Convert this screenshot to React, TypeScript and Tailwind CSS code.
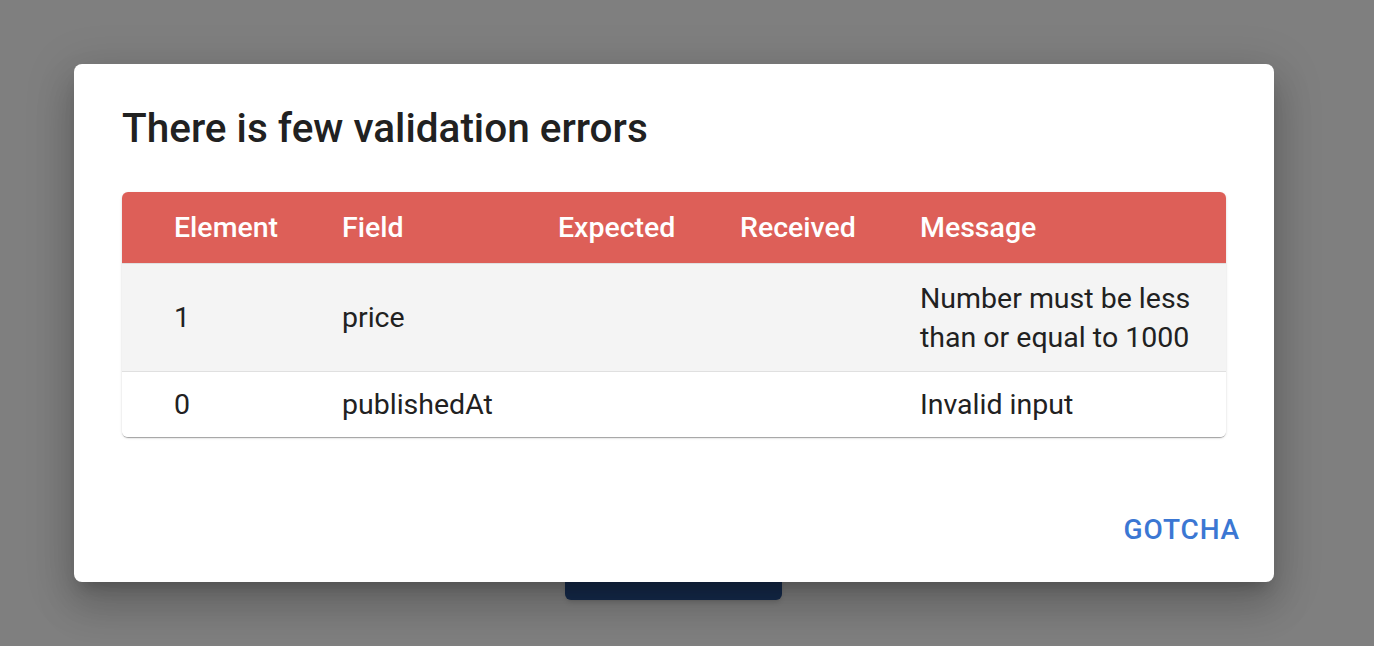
import React from 'react'

interface ErrorRow {
  element: string
  field: string
  expected: string
  received: string
  message: string
}

const rows: ErrorRow[] = [
  { element: '1', field: 'price', expected: '', received: '', message: 'Number must be less than or equal to 1000' },
  { element: '0', field: 'publishedAt', expected: '', received: '', message: 'Invalid input' },
]

const columns = ['Element', 'Field', 'Expected', 'Received', 'Message']

const grid = 'grid grid-cols-[168px_216px_182px_180px_1fr]'

export default function App() {
  return (
    <div
      className="relative h-[646px] w-full overflow-hidden bg-white"
      style={{ fontFamily: 'Roboto, "Noto Sans", sans-serif' }}
    >
      {/* Page content behind the dialog */}
      <div className="pt-[552px] pl-[565px]">
        <button className="h-[48px] w-[217px] rounded-md bg-[#2c5699] shadow-md" />
      </div>

      {/* Backdrop */}
      <div className="absolute inset-0 bg-black/50" />

      {/* Dialog */}
      <div className="absolute left-[74px] top-[64px] w-[1200px] h-[518px] rounded-lg bg-white px-[48px] pt-[40px] shadow-[0_11px_15px_-7px_rgba(0,0,0,0.2),0_24px_38px_3px_rgba(0,0,0,0.14),0_9px_46px_8px_rgba(0,0,0,0.12)]">
        <h2 className="text-[40.5px] leading-[48px] font-medium text-[#212121]">
          There is few validation errors
        </h2>

        <div className="mt-[40px] overflow-hidden rounded-md bg-white shadow-[0_2px_1px_-1px_rgba(0,0,0,0.2),0_1px_1px_0_rgba(0,0,0,0.14),0_1px_3px_0_rgba(0,0,0,0.12)]">
          {/* Header */}
          <div className={`${grid} h-[72px] items-center bg-[#dd5f58] border-b border-[#e0e0e0]`}>
            {columns.map((c) => (
              <div key={c} className="pl-[52px] pt-[2px] text-[28.5px] font-medium text-white">
                {c}
              </div>
            ))}
          </div>

          {/* Rows */}
          {rows.map((r, i) => (
            <div
              key={i}
              className={`${grid} items-center text-[28.5px] leading-[39px] text-[#212121] ${
                i === 0 ? 'h-[108px] bg-[#f4f4f4] border-b border-[#e0e0e0]' : 'h-[65px] bg-white'
              }`}
            >
              <div className="pl-[52px]">{r.element}</div>
              <div className="pl-[52px]">{r.field}</div>
              <div className="pl-[52px]">{r.expected}</div>
              <div className="pl-[52px]">{r.received}</div>
              <div className="pl-[52px] pr-[20px]">{r.message}</div>
            </div>
          ))}
        </div>

        {/* Actions */}
        <div className="mt-[69px] flex justify-end -mr-[22px]">
          <button className="px-2 h-[48px] text-[28px] font-medium tracking-[0.03em] uppercase text-[#3b77d3]">
            Gotcha
          </button>
        </div>
      </div>
    </div>
  )
}
